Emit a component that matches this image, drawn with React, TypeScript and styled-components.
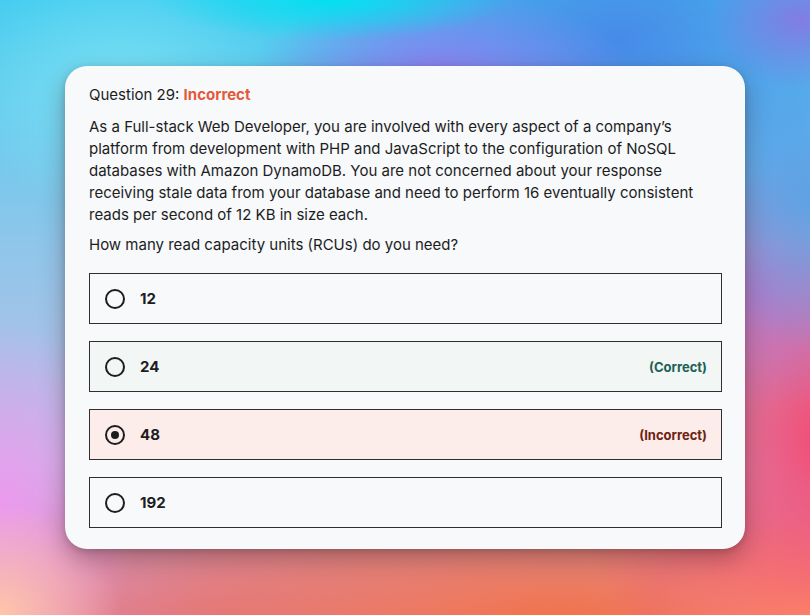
import React from "react";
import styled, { createGlobalStyle } from "styled-components";

const Global = createGlobalStyle`
  html, body { margin: 0; padding: 0; }
  body { width: 810px; height: 615px; overflow: hidden; font-family: Inter, "Noto Sans", sans-serif; }
  * { box-sizing: border-box; }
`;

const Backdrop = styled.div`
  width: 810px;
  height: 615px;
  padding: 66px 65px 0 65px;
  background:
    radial-gradient(ellipse 180px 40px at 330px 0px, rgba(0, 225, 240, 0.95), rgba(0, 225, 240, 0) 100%),
    radial-gradient(ellipse 170px 120px at 120px 90px, rgba(130, 230, 245, 0.8), rgba(130, 230, 245, 0) 100%),
    radial-gradient(ellipse 190px 80px at 440px 72px, rgba(138, 128, 240, 1), rgba(138, 128, 240, 0) 100%),
    radial-gradient(ellipse 90px 70px at 800px 20px, rgba(140, 115, 225, 0.85), rgba(140, 115, 225, 0) 100%),
    radial-gradient(ellipse 340px 230px at 620px 40px, rgba(70, 135, 232, 0.95), rgba(70, 135, 232, 0) 100%),
    radial-gradient(ellipse 120px 150px at 810px 200px, rgba(90, 165, 230, 0.9), rgba(90, 165, 230, 0) 100%),
    radial-gradient(ellipse 140px 120px at 760px 290px, rgba(180, 110, 210, 0.7), rgba(180, 110, 210, 0) 100%),
    radial-gradient(ellipse 260px 300px at 830px 440px, rgba(245, 72, 112, 1), rgba(245, 72, 112, 0) 100%),
    radial-gradient(ellipse 160px 100px at 810px 615px, rgba(255, 165, 100, 1), rgba(255, 165, 100, 0) 100%),
    radial-gradient(ellipse 440px 170px at 560px 625px, rgba(242, 115, 72, 1), rgba(242, 115, 72, 0) 100%),
    radial-gradient(ellipse 120px 110px at 0px 615px, rgba(255, 198, 170, 1), rgba(255, 198, 170, 0) 100%),
    radial-gradient(ellipse 140px 190px at 0px 510px, rgba(238, 152, 240, 0.95), rgba(238, 152, 240, 0) 100%),
    radial-gradient(ellipse 320px 150px at 220px 620px, rgba(225, 120, 125, 0.9), rgba(225, 120, 125, 0) 100%),
    linear-gradient(180deg, #45cdf0 0%, #8fc6ea 40%, #c0bde6 75%, #e08aa8 100%);
`;

const Card = styled.div`
  width: 680px;
  height: 483px;
  background: #f7f9fa;
  border-radius: 22px;
  padding: 18px 23px 22px 24px;
  box-shadow: 0 10px 24px rgba(60, 20, 20, 0.35), 0 2px 6px rgba(0, 0, 0, 0.15);
  color: #1c1d1f;
  display: flex;
  flex-direction: column;
`;

const Header = styled.div`
  font-size: 15px;
  line-height: 22px;
  margin-bottom: 10px;
`;

const Status = styled.span`
  color: #e4593b;
  font-weight: 700;
`;

const Prompt = styled.p<{ $gap: number }>`
  margin: 0 0 ${(p) => p.$gap}px 0;
  font-size: 15px;
  line-height: 22px;
`;

const Options = styled.div`
  display: flex;
  flex-direction: column;
  gap: 17px;
`;

type Tone = "plain" | "correct" | "incorrect";

const Option = styled.div<{ $tone: Tone }>`
  height: 51px;
  border: 1px solid #2d2f31;
  display: flex;
  align-items: center;
  padding: 0 14px 0 15px;
  background: ${(p) => (p.$tone === "correct" ? "#f2f6f4" : p.$tone === "incorrect" ? "#fcecea" : "#f7f9fa")};
`;

const Radio = styled.span<{ $checked: boolean }>`
  width: 20px;
  height: 20px;
  border-radius: 50%;
  border: 2px solid #1c1d1f;
  display: flex;
  align-items: center;
  justify-content: center;
  flex: none;
  &::after {
    content: "";
    width: 8px;
    height: 8px;
    border-radius: 50%;
    background: #1c1d1f;
    display: ${(p) => (p.$checked ? "block" : "none")};
  }
`;

const Label = styled.span`
  margin-left: 15px;
  font-size: 15px;
  font-weight: 700;
  flex: 1;
`;

const Verdict = styled.span<{ $tone: Tone }>`
  font-size: 13px;
  font-weight: 700;
  color: ${(p) => (p.$tone === "correct" ? "#1e6055" : "#6e2210")};
`;

const options: { text: string; tone: Tone; checked: boolean }[] = [
  { text: "12", tone: "plain", checked: false },
  { text: "24", tone: "correct", checked: false },
  { text: "48", tone: "incorrect", checked: true },
  { text: "192", tone: "plain", checked: false },
];

export default function App() {
  return (
    <>
      <Global />
      <Backdrop>
        <Card>
          <Header>
            Question 29: <Status>Incorrect</Status>
          </Header>
          <Prompt $gap={8}>
            As a Full-stack Web Developer, you are involved with every aspect of a company’s platform from development with
            PHP and JavaScript to the configuration of NoSQL databases with Amazon DynamoDB. You are not concerned about
            your response receiving stale data from your database and need to perform 16 eventually consistent reads per
            second of 12 KB in size each.
          </Prompt>
          <Prompt $gap={17}>How many read capacity units (RCUs) do you need?</Prompt>
          <Options>
            {options.map((o) => (
              <Option key={o.text} $tone={o.tone}>
                <Radio $checked={o.checked} />
                <Label>{o.text}</Label>
                {o.tone === "correct" && <Verdict $tone="correct">(Correct)</Verdict>}
                {o.tone === "incorrect" && <Verdict $tone="incorrect">(Incorrect)</Verdict>}
              </Option>
            ))}
          </Options>
        </Card>
      </Backdrop>
    </>
  );
}
